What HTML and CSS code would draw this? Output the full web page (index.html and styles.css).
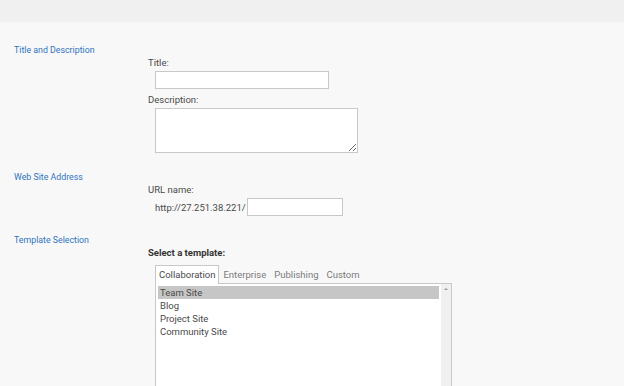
FILE: index.html
```html
<!DOCTYPE html>
<html lang="en">
<head>
  <meta charset="UTF-8">
  <title>New Site</title>
  <link rel="stylesheet" href="styles.css">
</head>
<body>

  <div class="topbar"></div>

  <div class="page">
    <div class="section">
      <div class="section-title">Title and Description</div>
      <div class="fields">
        <label for="title">Title:</label>
        <input type="text" id="title" class="title-input">
        <label for="desc" class="gap">Description:</label>
        <textarea id="desc" class="desc-input"></textarea>
      </div>
    </div>

    <div class="section">
      <div class="section-title">Web Site Address</div>
      <div class="fields">
        <label for="url">URL name:</label>
        <div class="url-row">
          <span class="url-prefix">http://27.251.38.221/</span>
          <input type="text" id="url" class="url-input">
        </div>
      </div>
    </div>

    <div class="section">
      <div class="section-title">Template Selection</div>
      <div class="fields">
        <div class="strong-label">Select a template:</div>
        <div class="tabs">
          <span class="tab active">Collaboration</span>
          <span class="tab">Enterprise</span>
          <span class="tab">Publishing</span>
          <span class="tab">Custom</span>
        </div>
        <div class="listbox">
          <div class="items">
            <div class="item selected">Team Site</div>
            <div class="item">Blog</div>
            <div class="item">Project Site</div>
            <div class="item">Community Site</div>
          </div>
          <div class="scrollbar">
            <span class="arrow"></span>
          </div>
        </div>
      </div>
    </div>
  </div>

</body>
</html>
```

FILE: styles.css
```css
body {
  margin: 0;
  font-family: Roboto, "Liberation Sans", sans-serif;
  font-size: 9.5px;
  color: #4a4a4a;
  background-color: #f8f8f8;
}

.topbar {
  height: 22px;
  background-color: #f0f0f0;
}

.page {
  padding-top: 22px;
}

.section {
  display: flex;
  margin-bottom: 18px;
}

.section-title {
  width: 134px;
  padding-left: 14px;
  font-size: 8.8px;
  line-height: 12px;
  color: #2f74bd;
}

.fields {
  padding-top: 12px;
  display: flex;
  flex-direction: column;
  align-items: flex-start;
}

label, .strong-label {
  display: block;
  line-height: 13px;
}

label.gap {
  margin-top: 4px;
}

.strong-label {
  font-weight: bold;
  color: #333;
}

input, textarea {
  box-sizing: border-box;
  margin: 2px 0 0 7px;
  border: 1px solid #c8c8c8;
  background-color: #fff;
  font-family: inherit;
  font-size: 9.5px;
  padding: 1px 3px;
}

.title-input {
  width: 174px;
  height: 18px;
}

.desc-input {
  width: 203px;
  height: 45px;
  resize: vertical;
}

.url-row {
  display: flex;
  align-items: center;
  margin-top: 2px;
  padding-left: 7px;
}

.url-prefix {
  padding-right: 1px;
}

.url-input {
  width: 96px;
  height: 18px;
  margin: 0;
}

.tabs {
  display: flex;
  margin: 6px 0 0 7px;
  position: relative;
  z-index: 1;
}

.tab {
  line-height: 17px;
  padding: 0 3px;
  color: #7a7a7a;
  border: 1px solid transparent;
  border-bottom: none;
}

.tab.active {
  color: #4a4a4a;
  background-color: #fff;
  border-color: #c8c8c8;
  padding-bottom: 1px;
  margin-bottom: -1px;
}

.listbox {
  display: flex;
  margin-left: 7px;
  width: 297px;
  height: 110px;
  box-sizing: border-box;
  border: 1px solid #c8c8c8;
  background-color: #fff;
}

.items {
  flex: 1;
  padding: 2px;
}

.item {
  line-height: 13px;
  padding-left: 2px;
}

.item.selected {
  background-color: #c6c6c6;
}

.scrollbar {
  width: 10px;
  background-color: #f0f0f0;
  display: flex;
  justify-content: center;
}

.arrow {
  margin-top: 4px;
  width: 0;
  height: 0;
  border-left: 2px solid transparent;
  border-right: 2px solid transparent;
  border-bottom: 2px solid #999;
}
```
